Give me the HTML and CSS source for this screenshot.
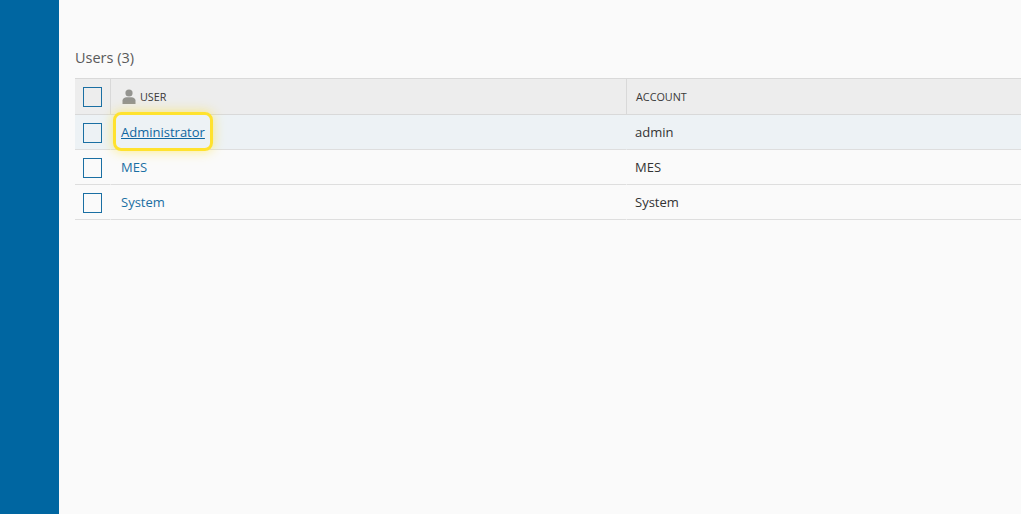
FILE: index.html
```html
<!DOCTYPE html>
<html lang="en">
<head>
<meta charset="utf-8">
<title>Users</title>
<link rel="stylesheet" href="styles.css">
</head>
<body>
<div class="app">
  <aside class="sidebar"></aside>
  <main class="content">
    <h1 class="title">Users (3)</h1>
    <div class="table">
      <div class="row head">
        <div class="c-check"><span class="box"></span></div>
        <div class="c-user">
          <svg class="icon" width="14" height="16" viewBox="0 0 14 16"><circle cx="7" cy="4" r="3.6" fill="#949490"/><path d="M0.5 15V11.5C0.5 9.6 2.5 8.6 4.5 8.3H9.5C11.5 8.6 13.5 9.6 13.5 11.5V15Z" fill="#949490"/></svg>
          <span>USER</span>
        </div>
        <div class="c-account">ACCOUNT</div>
      </div>
      <div class="row selected">
        <div class="c-check"><span class="box"></span></div>
        <div class="c-user"><a class="link focus" href="#">Administrator</a></div>
        <div class="c-account">admin</div>
      </div>
      <div class="row">
        <div class="c-check"><span class="box"></span></div>
        <div class="c-user"><a class="link" href="#">MES</a></div>
        <div class="c-account">MES</div>
      </div>
      <div class="row">
        <div class="c-check"><span class="box"></span></div>
        <div class="c-user"><a class="link" href="#">System</a></div>
        <div class="c-account">System</div>
      </div>
    </div>
  </main>
</div>
</body>
</html>
```
FILE: styles.css
```css
* { box-sizing: border-box; }
html, body { margin: 0; height: 100%; overflow: hidden; }
body { font-family: "Open Sans", sans-serif; font-size: 13px; color: #333; background: #fafafa; }
.app { display: flex; height: 514px; }
.sidebar { width: 59px; background: #0066a1; flex: none; }
.content { flex: 1; min-width: 0; padding: 49px 0 0 16px; }
.title { margin: 0 0 11px; font-size: 14.5px; line-height: 18px; font-weight: 400; color: #595959; }
.table { border-top: 1px solid #d9d9d9; }
.row { display: flex; height: 35px; align-items: stretch; }
.head { height: 36px; background: #ededed; font-size: 10.8px; color: #3a3a3a; }
.selected { background: #edf2f5; }
.c-check, .c-user, .c-account { display: flex; align-items: center; border-bottom: 1px solid #dedede; }
.head .c-check, .head .c-user, .head .c-account { border-bottom-color: #d9d9d9; }
.c-check { width: 36px; flex: none; padding: 1px 0 0 8px; border-right: 1px solid transparent; }
.head .c-check { padding-top: 0; border-right-color: #d9d9d9; }
.box { display: block; width: 19px; height: 20px; border: 1px solid #1a6fa3; }
.c-user { width: 516px; flex: none; padding-left: 10px; border-right: 1px solid transparent; }
.head .c-user { border-right-color: #d9d9d9; padding-left: 11px; gap: 4px; }
.c-account { flex: 1; padding-left: 8px; color: #333; }
.head .c-account { color: #3a3a3a; padding-left: 9px; }
.icon { display: block; }
.link { position: relative; color: #1a6fa3; text-decoration: none; line-height: 18px; }
.focus { color: #0f66a0; text-decoration: underline; }
.focus::after { content: ""; position: absolute; left: -8px; right: -8px; top: -11px; bottom: -10px; border: 3px solid #ffe22e; border-radius: 8px; box-shadow: 0 0 12px rgba(255, 226, 46, .6); pointer-events: none; }
```
